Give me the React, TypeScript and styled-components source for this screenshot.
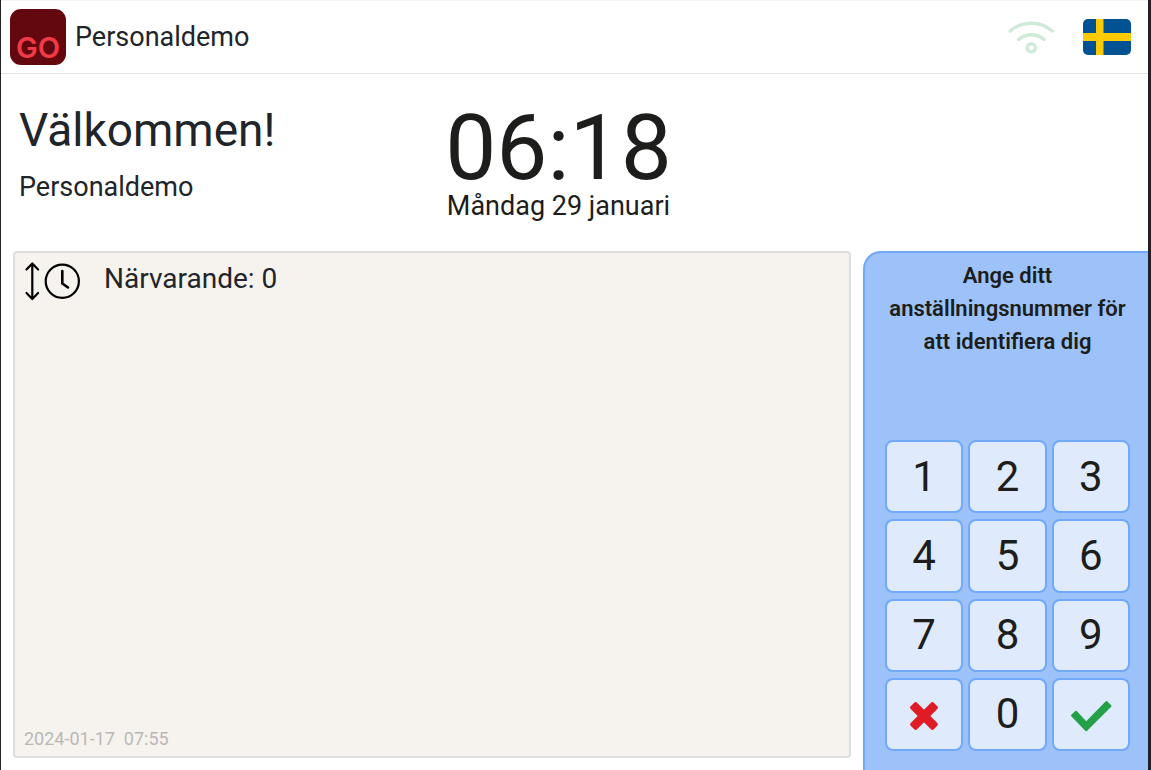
import React from "react";
import styled, { createGlobalStyle } from "styled-components";

const GlobalStyle = createGlobalStyle`
  *, *::before, *::after { box-sizing: border-box; }
  body {
    margin: 0;
    background: #fff;
    color: #212529;
    font-family: Roboto, "Liberation Sans", sans-serif;
  }
  h1, h2, p { margin: 0; font-weight: 400; }
  button { font-family: inherit; color: inherit; cursor: pointer; }
`;

const Page = styled.div`
  display: flex;
  flex-direction: column;
  min-height: 100vh;
  border: solid #212226;
  border-width: 0 3px 0 1px;
`;

const Header = styled.header`
  display: flex;
  align-items: center;
  height: 74px;
  padding: 0 17px 0 9px;
  border-top: 1px solid #f4f4f4;
  border-bottom: 1px solid #e3e3e3;
`;

const Logo = styled.svg`
  flex: none;
  width: 56px;
  height: 56px;
  margin-right: 9px;
`;

const Company = styled.span`
  flex: 1;
  font-size: 27px;
  line-height: 36px;
`;

const Wifi = styled.svg`
  width: 48px;
  height: 36px;
  margin-right: 28px;
`;

const LanguageButton = styled.button`
  display: flex;
  padding: 0;
  border: 0;
  background: none;
`;

const Flag = styled.svg`
  width: 48px;
  height: 36px;
  border-radius: 5px;
`;

const Intro = styled.section`
  display: grid;
  grid-template-columns: 1fr auto 1fr;
  height: 177px;
  padding: 24px 50px 0 18px;
`;

const Greeting = styled.h1`
  font-size: 46px;
  line-height: 64px;
`;

const Subtitle = styled.p`
  padding-top: 8px;
  font-size: 27px;
  line-height: 34px;
`;

const ClockBlock = styled.div`
  padding-top: 6px;
  color: #1d1d1b;
  text-align: center;
`;

const Time = styled.time`
  display: block;
  font-size: 91px;
  line-height: 88px;
`;

const DateLine = styled.p`
  font-size: 27px;
  line-height: 28px;
`;

const Main = styled.main`
  display: flex;
  flex: 1;
  gap: 12px;
  padding-left: 12px;
`;

const Presence = styled.section`
  display: flex;
  flex: 1;
  flex-direction: column;
  justify-content: space-between;
  margin-bottom: 12px;
  padding: 8px 9px 7px;
  border: 2px solid #dedede;
  border-radius: 4px;
  background: #f6f3ef;
`;

const PresenceHead = styled.div`
  display: flex;
  align-items: flex-start;
  gap: 22px;
`;

const SortButton = styled.button`
  display: flex;
  padding: 0;
  border: 0;
  background: none;
`;

const Count = styled.h2`
  font-size: 28px;
  line-height: 36px;
`;

const Stamp = styled.p`
  color: #b9b8b6;
  font-size: 18px;
  line-height: 20px;
  white-space: pre;
`;

const Panel = styled.aside`
  display: flex;
  flex: none;
  flex-direction: column;
  justify-content: space-between;
  width: 285px;
  padding: 6px 18px 19px 20px;
  border: solid #71a8f9;
  border-width: 2px 0 0 2px;
  border-radius: 18px 0 0 0;
  background: #9cc2f9;
  color: #1d1d1b;
`;

const Prompt = styled.h2`
  && { font-weight: 600; }
  font-size: 22px;
  line-height: 33px;
  text-align: center;
`;

const Keys = styled.div`
  display: grid;
  grid-template-columns: repeat(3, 1fr);
  grid-template-rows: repeat(4, 1fr);
  gap: 6px 5px;
  height: 311px;
`;

const Key = styled.button`
  display: flex;
  align-items: center;
  justify-content: center;
  padding: 0;
  border: 2px solid #71a8f9;
  border-radius: 8px;
  background: #dfebfc;
  font-size: 42px;
  line-height: 48px;
`;

const KeyIcon = styled.svg`
  width: 48px;
  height: 48px;
  margin-top: 4px;
`;

const digits = ["1", "2", "3", "4", "5", "6", "7", "8", "9"];

export default function App() {
  return (
    <>
      <GlobalStyle />
      <Page>
        <Header>
          <Logo viewBox="0 0 56 56" role="img" aria-label="GO">
            <rect width="56" height="56" rx="11" fill="#64080f" />
            <text x="28" y="49" textAnchor="middle" fontFamily="Inter, sans-serif" fontWeight="600" fontSize="29" fill="#f03a48">GO</text>
          </Logo>
          <Company>Personaldemo</Company>
          <Wifi viewBox="0 0 48 36" fill="none" stroke="#d0eada" strokeWidth="3.5" strokeLinecap="round" role="img" aria-label="Wifi">
            <path d="M3.200 12C15 1.500 33.500 1.500 45.300 12" />
            <path d="M11.700 20.500C19 14 29.500 14 37 20.500" />
            <circle cx="24.300" cy="28.800" r="4.100" />
          </Wifi>
          <LanguageButton aria-label="Svenska">
            <Flag viewBox="0 0 48 36">
              <rect width="48" height="36" fill="#005293" />
              <path d="M13 0h7.500v36H13zM0 14h48v8H0z" fill="#fecb00" />
            </Flag>
          </LanguageButton>
        </Header>
        <Intro>
          <div>
            <Greeting>Välkommen!</Greeting>
            <Subtitle>Personaldemo</Subtitle>
          </div>
          <ClockBlock>
            <Time>06:18</Time>
            <DateLine>Måndag 29 januari</DateLine>
          </ClockBlock>
        </Intro>
        <Main>
          <Presence>
            <PresenceHead>
              <SortButton aria-label="Sortera efter tid">
                <svg width="58" height="40" viewBox="0 0 58 40" fill="none" stroke="#000" strokeWidth="2.2" strokeLinecap="round" strokeLinejoin="round">
                  <path d="M8.300 3v34M2.500 8.500l5.800-6 5.800 6M2.500 32l5.800 6 5.800-6" />
                  <circle cx="38.300" cy="20.300" r="16.600" />
                  <path d="M38.300 10v12.500l5.700 4" strokeWidth="2.600" />
                </svg>
              </SortButton>
              <Count>Närvarande: 0</Count>
            </PresenceHead>
            <Stamp>{"2024-01-17  07:55"}</Stamp>
          </Presence>
          <Panel>
            <Prompt>Ange ditt anställningsnummer för att identifiera dig</Prompt>
            <Keys>
              {digits.map((d) => (
                <Key key={d}>{d}</Key>
              ))}
              <Key aria-label="Avbryt">
                <KeyIcon viewBox="-24 -24 48 48" fill="#df1b25">
                  <rect x="-16.300" y="-4.500" width="32.600" height="9" rx="2" transform="rotate(45)" />
                  <rect x="-16.300" y="-4.500" width="32.600" height="9" rx="2" transform="rotate(-45)" />
                </KeyIcon>
              </Key>
              <Key>0</Key>
              <Key aria-label="Bekräfta">
                <KeyIcon viewBox="0 0 48 48" fill="#24a148" stroke="#24a148" strokeWidth="2" strokeLinejoin="round">
                  <path d="M5 23.500L9 19.800L19.200 30.800L39.500 10L43.500 14L19.200 38.200Z" />
                </KeyIcon>
              </Key>
            </Keys>
          </Panel>
        </Main>
      </Page>
    </>
  );
}
